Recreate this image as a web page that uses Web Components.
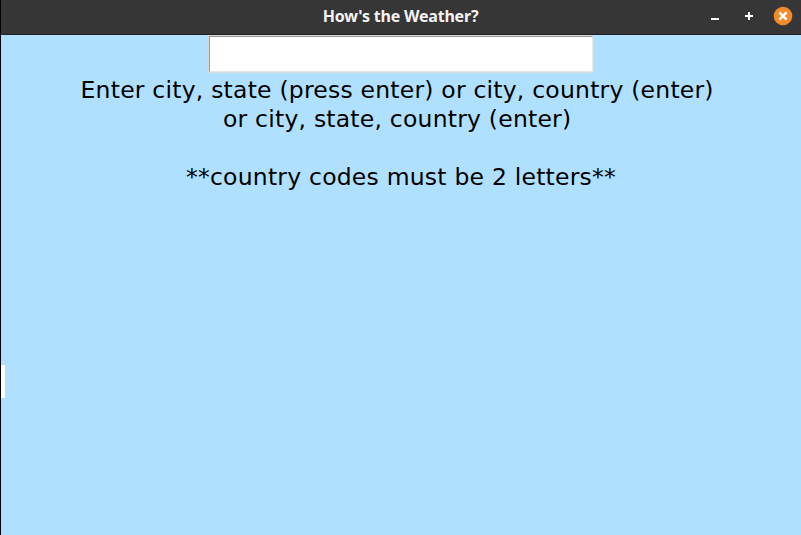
<!DOCTYPE html>
<html lang="en">
<head>
<meta charset="utf-8">
<title>How's the Weather?</title>
<style>
html, body { margin: 0; height: 100%; overflow: hidden; background: #02020a; }
</style>
</head>
<body>
<weather-window></weather-window>
<script>
class WindowControls extends HTMLElement {
  constructor() {
    super();
    this.attachShadow({ mode: 'open' }).innerHTML = `
      <style>
        :host { display: flex; gap: 14px; align-items: center; }
        svg { display: block; width: 20px; height: 20px; }
      </style>
      <svg viewBox="0 0 20 20"><path d="M6 12h8v2H6z" fill="#fff"/></svg>
      <svg viewBox="0 0 20 20"><path d="M6 9h3V6h2v3h3v2h-3v3H9v-3H6z" fill="#fff"/></svg>
      <svg viewBox="0 0 20 20"><circle cx="10" cy="10" r="9.3" fill="#f18b2c"/><path d="M6.4 6.4l7.2 7.2M13.6 6.4l-7.2 7.2" stroke="#fff" stroke-width="2.5"/></svg>`;
  }
}
class TitleBar extends HTMLElement {
  constructor() {
    super();
    this.attachShadow({ mode: 'open' }).innerHTML = `
      <style>
        :host { display: grid; grid-template-columns: 1fr auto 1fr; align-items: center; box-sizing: border-box;
          height: 35px; padding: 0 8px 2px 0; background: #363636; border-bottom: 1px solid #222;
          font: 700 16px/32px "Noto Sans", sans-serif; letter-spacing: -0.2px; color: #f4f4f4; }
        .title { grid-column: 2; white-space: nowrap; padding-left: 7px; }
        window-controls { justify-self: end; }
      </style>
      <span class="title"><slot></slot></span>
      <window-controls></window-controls>`;
  }
}
class CityEntry extends HTMLElement {
  constructor() {
    super();
    this.attachShadow({ mode: 'open' }).innerHTML = `
      <style>
        :host { display: block; box-sizing: border-box; width: 386px; height: 38px; border: 1px solid #d9d9d9; }
        input { display: block; box-sizing: border-box; width: 100%; height: 100%; margin: 0; padding: 0 4px;
          background: #fff; border: 1px solid; border-color: #979797 #e6e6e6 #e6e6e6 #979797;
          font: 24px "DejaVu Sans", sans-serif; outline: 0; border-radius: 0; }
      </style>
      <input type="text" aria-label="City">`;
  }
}
class HelpText extends HTMLElement {
  constructor() {
    super();
    this.attachShadow({ mode: 'open' }).innerHTML = `
      <style>
        :host { display: flex; flex-direction: column; align-items: center; padding-top: 3px;
          font: 23.5px/29px "DejaVu Sans", sans-serif; letter-spacing: 0.21px; color: #000; }
        div { height: 29px; white-space: pre; }
      </style>
      <div>Enter city, state (press enter) or city, country (enter) </div>
      <div>or city, state, country (enter) </div>
      <div></div>
      <div>**country codes must be 2 letters**</div>`;
  }
}
class WeatherWindow extends HTMLElement {
  constructor() {
    super();
    this.attachShadow({ mode: 'open' }).innerHTML = `
      <style>
        :host { display: grid; grid-template-rows: 35px 1fr; height: 535px; margin-left: 1px; }
        main { display: grid; grid-template-columns: 4px 1fr 4px; background: #b0e0ff; }
        .result { margin-top: 330px; height: 33px; background: #fff; }
        .form { display: flex; flex-direction: column; align-items: center; min-width: 0; }
      </style>
      <title-bar>How's the Weather?</title-bar>
      <main>
        <div class="result"></div>
        <div class="form"><city-entry></city-entry><help-text></help-text></div>
      </main>`;
  }
}
customElements.define('window-controls', WindowControls);
customElements.define('title-bar', TitleBar);
customElements.define('city-entry', CityEntry);
customElements.define('help-text', HelpText);
customElements.define('weather-window', WeatherWindow);
</script>
</body>
</html>
